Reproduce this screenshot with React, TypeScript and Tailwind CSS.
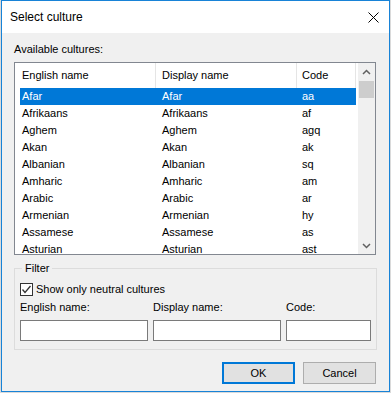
import React from "react";

const rows: [string, string, string][] = [
  ["Afar", "Afar", "aa"],
  ["Afrikaans", "Afrikaans", "af"],
  ["Aghem", "Aghem", "agq"],
  ["Akan", "Akan", "ak"],
  ["Albanian", "Albanian", "sq"],
  ["Amharic", "Amharic", "am"],
  ["Arabic", "Arabic", "ar"],
  ["Armenian", "Armenian", "hy"],
  ["Assamese", "Assamese", "as"],
  ["Asturian", "Asturian", "ast"],
];

function Chevron({ up }: { up?: boolean }) {
  return (
    <svg width="9" height="6" viewBox="0 0 9 6">
      <path
        d={up ? "M1 5 L4.5 1.5 L8 5" : "M1 1 L4.5 4.5 L8 1"}
        fill="none"
        stroke="#606060"
        strokeWidth="1.5"
      />
    </svg>
  );
}

export default function App() {
  return (
    <div
      className="w-[391px] h-[393px] bg-[#dadada] pl-[1px] text-[11px] text-black leading-[15px]"
      style={{ fontFamily: '"Liberation Sans", Arial, sans-serif' }}
    >
      <div className="w-[389px] h-[392px] border border-[#1883d7] flex flex-col bg-[#f0f0f0]">
        {/* title bar */}
        <div className="h-[32px] bg-white flex items-center justify-between pl-[8px] pr-[10px] shrink-0">
          <span className="text-[12px]">Select culture</span>
          <svg width="11" height="11" viewBox="0 0 11 11">
            <path d="M0.5 0.5 L10.5 10.5 M10.5 0.5 L0.5 10.5" stroke="#000" strokeWidth="1" />
          </svg>
        </div>

        <div className="flex flex-col pl-[12px] pr-[13px]">
          <div className="mt-[9px]">Available cultures:</div>

          {/* list view */}
          <div className="mt-[5px] h-[193px] border border-[#828790] bg-white flex">
            <div className="flex-1 flex flex-col overflow-hidden">
              <div className="flex h-[25px] shrink-0">
                <div className="w-[141px] border-r border-[#e5e5e5] pl-[7px] flex items-center">English name</div>
                <div className="w-[141px] border-r border-[#e5e5e5] pl-[6px] flex items-center">Display name</div>
                <div className="w-[59px] border-r border-[#e5e5e5] pl-[5px] flex items-center">Code</div>
              </div>
              <div className="pl-[5px] flex flex-col">
                {rows.map((r, i) => (
                  <div
                    key={r[0]}
                    className={
                      "flex h-[17px] w-[336px] items-center shrink-0 " +
                      (i === 0 ? "bg-[#0078d7] text-white" : "")
                    }
                  >
                    <div className="w-[140px] pl-[2px] whitespace-nowrap">{r[0]}</div>
                    <div className="w-[140px] pl-[2px] whitespace-nowrap">{r[1]}</div>
                    <div className="w-[56px] pl-[2px] whitespace-nowrap">{r[2]}</div>
                  </div>
                ))}
              </div>
            </div>
            {/* scrollbar */}
            <div className="w-[17px] bg-[#f0f0f0] flex flex-col shrink-0">
              <div className="h-[17px] flex items-center justify-center">
                <Chevron up />
              </div>
              <div className="mx-[1px] mt-[1px] h-[17px] bg-[#cdcdcd]" />
              <div className="flex-1" />
              <div className="h-[17px] flex items-center justify-center">
                <Chevron />
              </div>
            </div>
          </div>

          {/* filter group */}
          <fieldset className="mt-[6px] border border-[#dcdcdc] px-[5px] pb-[8px]">
            <legend className="ml-[2px] px-[3px]">Filter</legend>
            <label className="mt-[6px] flex items-center gap-[3px]">
              <span className="w-[13px] h-[13px] border border-[#333333] bg-white flex items-center justify-center">
                <svg width="11" height="11" viewBox="0 0 11 11">
                  <path d="M1.5 5.5 L4 8.5 L9.5 2" fill="none" stroke="#333" strokeWidth="1.3" />
                </svg>
              </span>
              <span>Show only neutral cultures</span>
            </label>
            <div className="mt-[3px] flex gap-[5px]">
              <div className="flex flex-col w-[128px]">
                <span>English name:</span>
                <div className="mt-[5px] h-[21px] border border-[#7a7a7a] bg-white" />
              </div>
              <div className="flex flex-col w-[128px]">
                <span>Display name:</span>
                <div className="mt-[5px] h-[21px] border border-[#7a7a7a] bg-white" />
              </div>
              <div className="flex flex-col w-[85px]">
                <span>Code:</span>
                <div className="mt-[5px] h-[21px] border border-[#7a7a7a] bg-white" />
              </div>
            </div>
          </fieldset>

          {/* buttons */}
          <div className="mt-[12px] flex justify-end gap-[8px]">
            <button className="w-[73px] h-[22px] border-2 border-[#0078d7] bg-[#e1e1e1] flex items-center justify-center">
              OK
            </button>
            <button className="w-[73px] h-[22px] border border-[#adadad] bg-[#e1e1e1] flex items-center justify-center">
              Cancel
            </button>
          </div>
        </div>
      </div>
    </div>
  );
}
